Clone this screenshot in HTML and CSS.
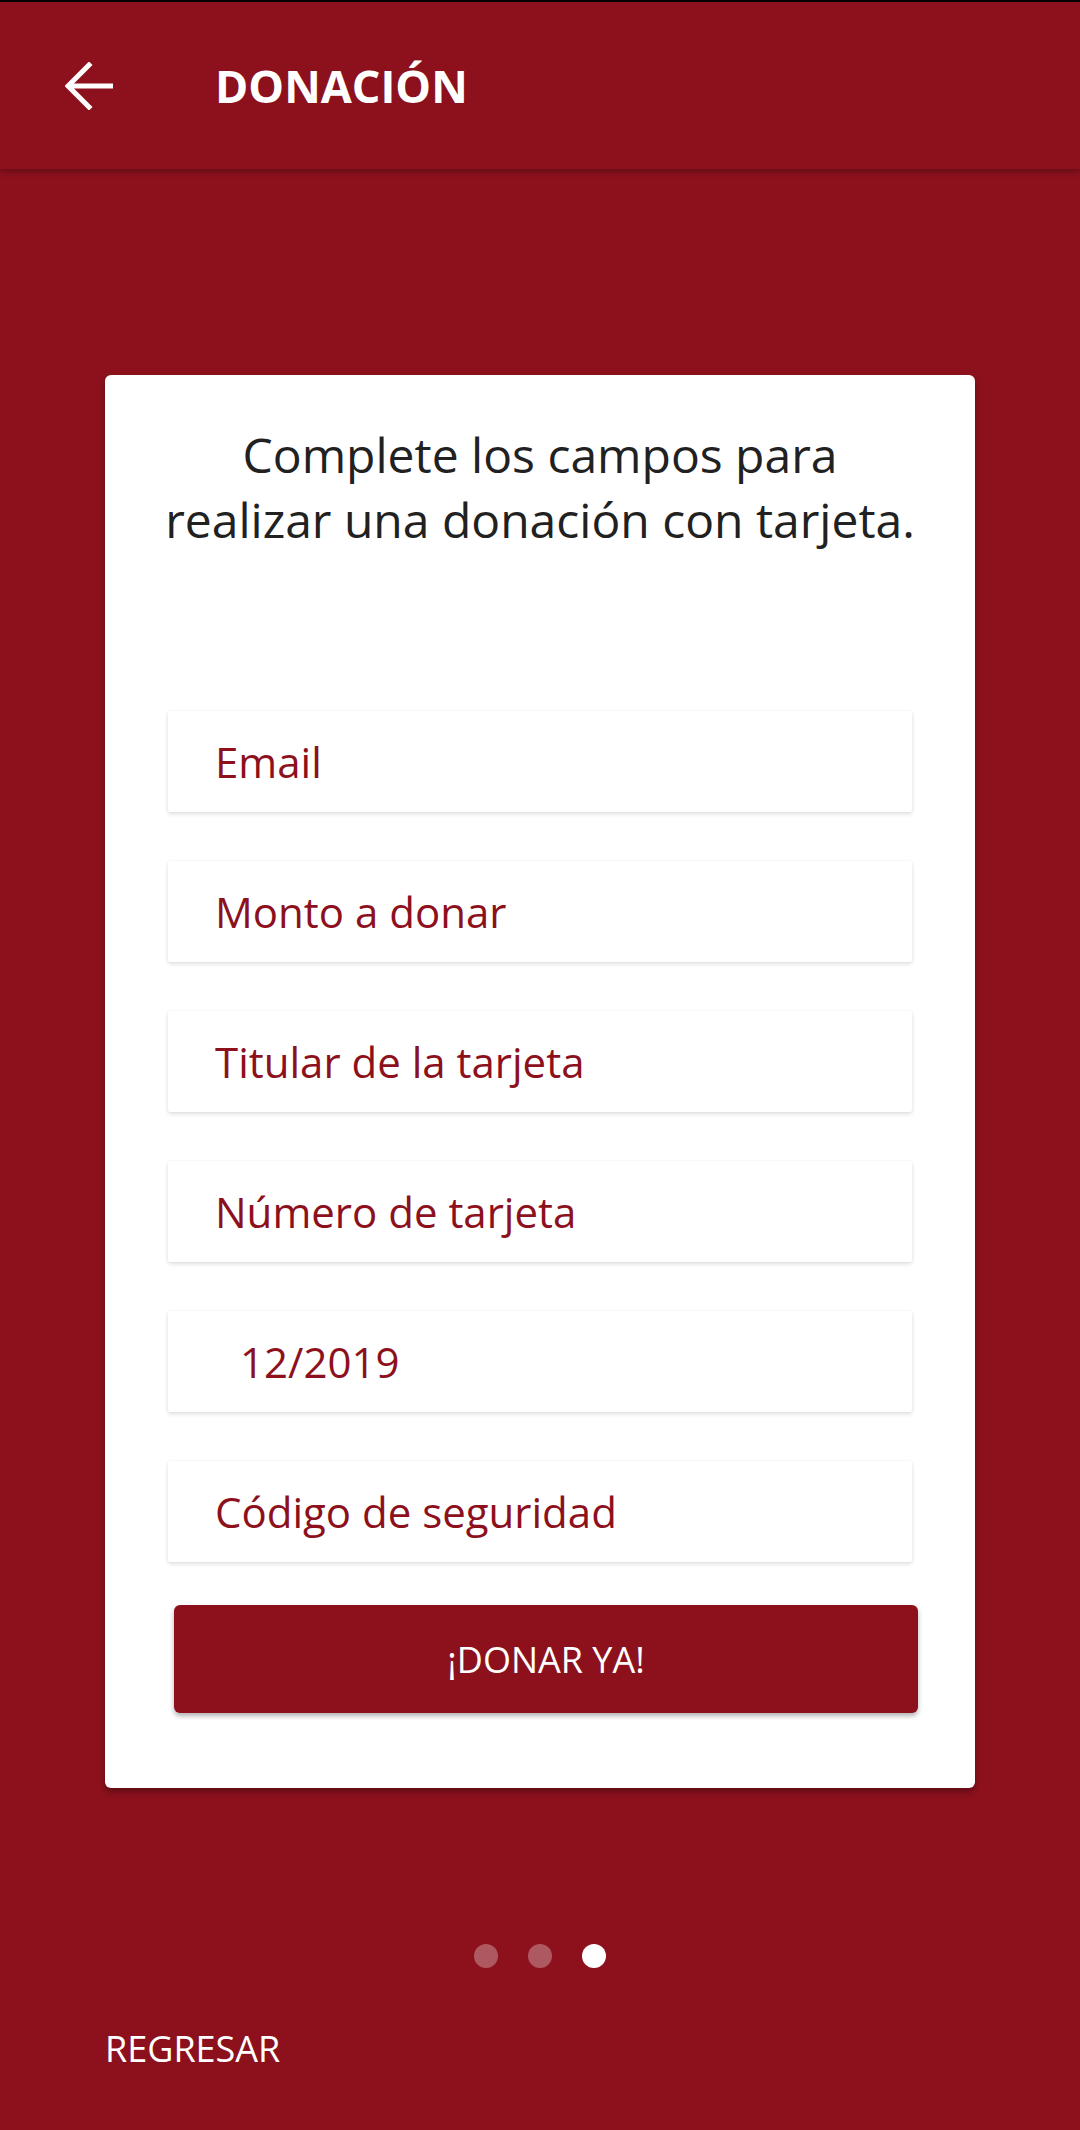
FILE: index.html
```html
<!DOCTYPE html>
<html lang="es">
<head>
  <meta charset="UTF-8">
  <meta name="viewport" content="width=device-width, initial-scale=1.0">
  <title>Donación</title>
  <link rel="stylesheet" href="styles.css">
</head>
<body>
  <div class="status-strip"></div>

  <header class="toolbar">
    <a href="#" class="back" aria-label="Regresar">
      <svg width="48" height="48" viewBox="0 0 48 48" fill="none" stroke="#fff" stroke-width="5" stroke-linecap="square">
        <path d="M46 24H6"/>
        <path d="M24 3L3 24l21 21"/>
      </svg>
    </a>
    <h1 class="toolbar-title">DONACIÓN</h1>
  </header>

  <main class="content">
    <form class="card">
      <p class="intro">Complete los campos para realizar una donación con tarjeta.</p>

      <div class="fields">
        <input class="field" type="email" placeholder="Email">
        <input class="field" type="text" placeholder="Monto a donar">
        <input class="field" type="text" placeholder="Titular de la tarjeta">
        <input class="field" type="text" placeholder="Número de tarjeta">
        <input class="field field-date" type="text" value="12/2019">
        <input class="field" type="text" placeholder="Código de seguridad">
      </div>

      <button type="button" class="button">¡DONAR YA!</button>
    </form>

    <div class="dots">
      <span class="dot"></span>
      <span class="dot"></span>
      <span class="dot active"></span>
    </div>

    <a href="#" class="link-back">REGRESAR</a>
  </main>
</body>
</html>
```

FILE: styles.css
```css
body {
  font-family: "Open Sans", "Noto Sans", sans-serif;
  margin: 0;
  padding: 0;
  min-height: 100vh;
  background-color: #8c111d;
  color: #fff;
}
.status-strip {
  height: 2px;
  background-color: #000;
}
.toolbar {
  position: relative;
  z-index: 1;
  display: flex;
  align-items: center;
  height: 167px;
  padding-left: 65px;
  background-color: #8c111d;
  box-shadow: 0 3px 6px rgba(0, 0, 0, 0.28);
}
.back {
  display: flex;
  width: 48px;
  height: 48px;
}
.toolbar-title {
  margin: 0 0 0 102px;
  font-size: 45px;
  font-weight: 700;
  color: #fff;
}
.content {
  display: flex;
  flex-direction: column;
  padding-top: 206px;
}
.card {
  width: 870px;
  box-sizing: border-box;
  margin: 0 auto;
  padding: 47px 63px 75px;
  background-color: #fff;
  border-radius: 6px;
  box-shadow: 0 4px 6px rgba(0, 0, 0, 0.3);
}
.intro {
  margin: 0 -8px 159px;
  font-size: 48px;
  text-align: center;
  color: #212121;
}
.fields {
  display: flex;
  flex-direction: column;
  gap: 49px;
}
.field {
  display: block;
  width: 100%;
  height: 101px;
  box-sizing: border-box;
  padding: 0 0 0 47px;
  border: none;
  border-radius: 2px;
  outline: none;
  background-color: #fff;
  font-family: inherit;
  font-size: 42px;
  color: #8c111d;
  box-shadow: 0 2px 4px rgba(0, 0, 0, 0.13), 0 0 2px rgba(0, 0, 0, 0.05);
}
.field::placeholder {
  color: #8c111d;
  opacity: 1;
}
.field-date {
  padding-left: 72px;
}
.button {
  display: block;
  width: 744px;
  height: 108px;
  margin: 43px 0 0 6px;
  border: none;
  border-radius: 6px;
  background-color: #8c111d;
  font-family: inherit;
  font-size: 36px;
  color: #fff;
  box-shadow: 0 3px 5px rgba(0, 0, 0, 0.3);
}
.dots {
  display: flex;
  justify-content: center;
  gap: 30px;
  margin-top: 156px;
}
.dot {
  width: 24px;
  height: 24px;
  border-radius: 50%;
  background-color: rgba(255, 255, 255, 0.3);
}
.dot.active {
  background-color: #fff;
}
.link-back {
  align-self: flex-start;
  margin: 56px 0 0 105px;
  font-size: 36px;
  color: #fff;
  text-decoration: none;
}
```
